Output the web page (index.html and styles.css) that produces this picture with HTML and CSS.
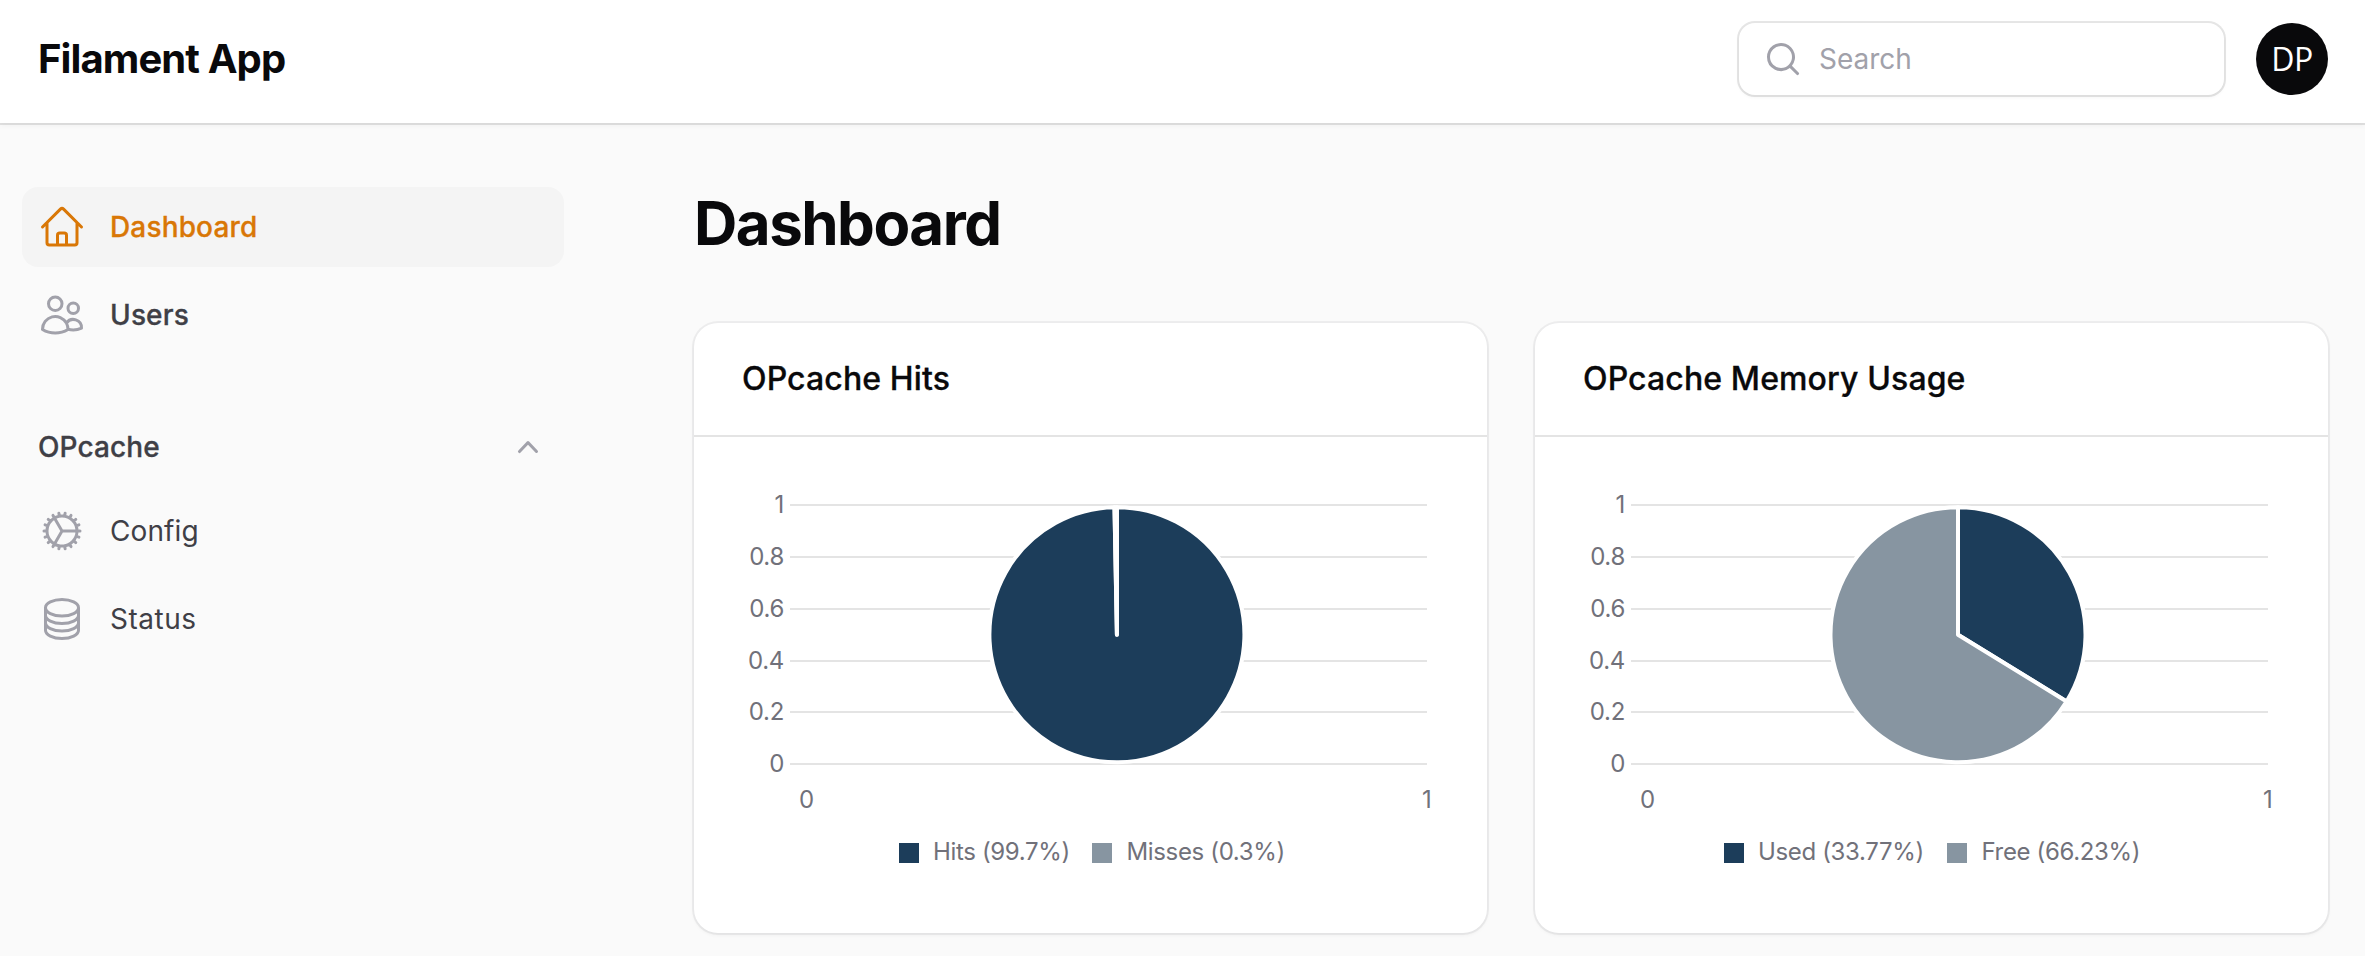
FILE: index.html
```html
<!DOCTYPE html>
<html lang="en">
<head>
<meta charset="utf-8">
<title>Dashboard - Filament App</title>
<link rel="stylesheet" href="styles.css">
</head>
<body>
<header class="topbar">
  <div class="brand">Filament App</div>
  <div class="search">
    <svg class="search-icon" viewBox="0 0 20 20"><path fill-rule="evenodd" d="M9 3.5a5.5 5.5 0 100 11 5.5 5.5 0 000-11zM2 9a7 7 0 1112.452 4.391l3.328 3.329a.75.75 0 11-1.06 1.06l-3.329-3.328A7 7 0 012 9z"/></svg>
    <span>Search</span>
  </div>
  <div class="avatar">DP</div>
</header>
<div class="layout">
  <nav class="sidebar">
    <a class="item item-active">
      <svg class="icon" viewBox="0 0 24 24"><path d="M2.25 12l8.954-8.955c.44-.439 1.152-.439 1.591 0L21.75 12M4.5 9.75v10.125c0 .621.504 1.125 1.125 1.125H9.75v-4.875c0-.621.504-1.125 1.125-1.125h2.25c.621 0 1.125.504 1.125 1.125V21h4.125c.621 0 1.125-.504 1.125-1.125V9.75M8.25 21h8.25"/></svg>
      <span>Dashboard</span>
    </a>
    <a class="item">
      <svg class="icon" viewBox="0 0 24 24"><path d="M15 19.128a9.38 9.38 0 002.625.372 9.337 9.337 0 004.121-.952 4.125 4.125 0 00-7.533-2.493M15 19.128v-.003c0-1.113-.285-2.16-.786-3.07M15 19.128v.106A12.318 12.318 0 018.624 21c-2.331 0-4.512-.645-6.374-1.766l-.001-.109a6.375 6.375 0 0111.964-3.07M12 6.375a3.375 3.375 0 11-6.75 0 3.375 3.375 0 016.75 0zm8.25 2.25a2.625 2.625 0 11-5.25 0 2.625 2.625 0 015.25 0z"/></svg>
      <span>Users</span>
    </a>
    <div class="group">
      <span>OPcache</span>
      <svg class="chevron" viewBox="0 0 20 20"><path d="M14.77 12.79a.75.75 0 01-1.06-.02L10 8.832 6.29 12.77a.75.75 0 11-1.08-1.04l4.25-4.5a.75.75 0 011.08 0l4.25 4.5a.75.75 0 01-.02 1.06z"/></svg>
    </div>
    <a class="item item-sub">
      <svg class="icon" viewBox="0 0 24 24"><path d="M4.5 12a7.5 7.5 0 0015 0m-15 0a7.5 7.5 0 1115 0m-15 0H3m16.5 0H21m-1.5 0H12m-8.457 3.077l1.41-.513m14.095-5.13l1.41-.513M5.106 17.785l1.15-.964m11.49-9.642l1.149-.964M7.501 19.795l.75-1.3m7.5-12.99l.75-1.3m-6.063 16.658l.26-1.477m2.605-14.772l.26-1.477m0 17.726l-.26-1.477M10.698 4.614l-.26-1.477M16.5 19.794l-.75-1.299M7.5 4.205L12 12m6.894 5.785l-1.149-.964M6.256 7.178l-1.15-.964m15.352 8.864l-1.41-.513M4.954 9.435l-1.41-.514M12.002 12l-3.75 6.495"/></svg>
      <span>Config</span>
    </a>
    <a class="item item-sub">
      <svg class="icon" viewBox="0 0 24 24"><path d="M20.25 6.375c0 2.278-3.694 4.125-8.25 4.125S3.75 8.653 3.75 6.375m16.5 0c0-2.278-3.694-4.125-8.25-4.125S3.75 4.097 3.75 6.375m16.5 0v11.25c0 2.278-3.694 4.125-8.25 4.125s-8.25-1.847-8.25-4.125V6.375m16.5 0v3.75m-16.5-3.75v3.75m16.5 0v3.75C20.25 16.153 16.556 18 12 18s-8.25-1.847-8.25-4.125v-3.75m16.5 0c0 2.278-3.694 4.125-8.25 4.125s-8.25-1.847-8.25-4.125"/></svg>
      <span class="status-label">Status</span>
    </a>
  </nav>
  <main class="main">
    <h1 class="title">Dashboard</h1>
    <div class="cards">
      <section class="card">
        <h2 class="card-title">OPcache Hits</h2>
        <svg class="chart" viewBox="0 0 793 496">
          <path class="grid" d="M96 68H733M96 120H733M96 172H733M96 224H733M96 275H733M96 327H733"/>
          <g class="y-ticks">
            <text x="90" y="76">1</text><text x="90" y="128">0.8</text><text x="90" y="180">0.6</text><text x="90" y="232">0.4</text><text x="90" y="283">0.2</text><text x="90" y="335">0</text>
          </g>
          <g class="x-ticks"><text x="112.5" y="371">0</text><text x="733" y="371">1</text></g>
          <path class="slice dark" d="M422.9 197.7V70.2A127.5 127.5 0 1 1 420.497 70.223Z"/>
          <path class="slice gray" d="M422.9 197.7L420.497 70.223A127.5 127.5 0 0 1 422.9 70.2Z"/>
          <rect class="dark" x="205" y="406" width="20" height="20"/>
          <text class="legend" x="239" y="423">Hits (99.7%)</text>
          <rect class="gray" x="398" y="406" width="20" height="20"/>
          <text class="legend" x="432.5" y="423">Misses (0.3%)</text>
        </svg>
      </section>
      <section class="card">
        <h2 class="card-title">OPcache Memory Usage</h2>
        <svg class="chart" viewBox="0 0 793 496">
          <path class="grid" d="M96 68H733M96 120H733M96 172H733M96 224H733M96 275H733M96 327H733"/>
          <g class="y-ticks">
            <text x="90" y="76">1</text><text x="90" y="128">0.8</text><text x="90" y="180">0.6</text><text x="90" y="232">0.4</text><text x="90" y="283">0.2</text><text x="90" y="335">0</text>
          </g>
          <g class="x-ticks"><text x="112.5" y="371">0</text><text x="733" y="371">1</text></g>
          <path class="slice dark" d="M423 197.7V70.2A127.5 127.5 0 0 1 531.6 264.5Z"/>
          <path class="slice gray" d="M423 197.7L531.6 264.5A127.5 127.5 0 1 1 423 70.2Z"/>
          <rect class="dark" x="189" y="406" width="20" height="20"/>
          <text class="legend" x="223" y="423">Used (33.77%)</text>
          <rect class="gray" x="412" y="406" width="20" height="20"/>
          <text class="legend" x="446.5" y="423">Free (66.23%)</text>
        </svg>
      </section>
    </div>
  </main>
</div>
</body>
</html>
```

FILE: styles.css
```css
* { box-sizing: border-box; }
body {
  margin: 0;
  height: 956px;
  overflow: hidden;
  background: #fafafa;
  color: #09090b;
  font-family: Inter, "Liberation Sans", sans-serif;
}
.topbar {
  display: flex;
  align-items: center;
  height: 123px;
  padding: 0 37px 5px 38px;
  background: #fff;
  box-shadow: 0 0 0 2px rgba(9, 9, 11, .1), 0 2px 6px rgba(0, 0, 0, .05);
}
.brand {
  flex: 1;
  font-size: 40px;
  font-weight: 700;
  line-height: 40px;
  letter-spacing: -.9px;
}
.search {
  display: flex;
  align-items: center;
  gap: 16px;
  width: 485px;
  height: 72px;
  margin-right: 32px;
  padding-left: 24px;
  border-radius: 16px;
  background: #fff;
  box-shadow: 0 0 0 2px rgba(9, 9, 11, .1), 0 2px 4px rgba(0, 0, 0, .05);
  color: #a1a1aa;
  font-size: 28px;
}
.search-icon { flex: none; width: 40px; height: 40px; fill: #a1a1aa; }
.icon {
  flex: none;
  width: 48px;
  height: 48px;
  fill: none;
  stroke: #a1a1aa;
  stroke-width: 1.5;
  stroke-linecap: round;
  stroke-linejoin: round;
}
.avatar {
  display: flex;
  align-items: center;
  justify-content: center;
  width: 72px;
  height: 72px;
  border-radius: 50%;
  background: #09090b;
  color: #fff;
  font-family: "Open Sans", "Noto Sans", sans-serif;
  font-size: 32px;
  line-height: 44px;
  letter-spacing: -.5px;
}
.layout { display: flex; }
.sidebar {
  display: flex;
  flex-direction: column;
  gap: 8px;
  width: 564px;
  padding: 64px 0 0 22px;
}
.item {
  display: flex;
  align-items: center;
  gap: 24px;
  height: 80px;
  padding: 0 16px;
  border-radius: 16px;
  color: #3f3f46;
  font-size: 28px;
  font-weight: 500;
  letter-spacing: .15px;
  -webkit-text-stroke: .3px currentColor;
}
.item-active { background: #f4f4f4; color: #d97706; }
.item-active .icon { stroke: #d97706; }
.item-sub {
  font-weight: 400;
  letter-spacing: .1px;
  -webkit-text-stroke: 0;
}
.status-label { letter-spacing: .5px; }
.group {
  display: flex;
  align-items: center;
  justify-content: space-between;
  height: 72px;
  margin-top: 48px;
  padding: 0 16px;
  color: #3f3f46;
  font-size: 28px;
  font-weight: 500;
  letter-spacing: .1px;
  -webkit-text-stroke: .3px currentColor;
}
.chevron { width: 40px; height: 40px; fill: #a1a1aa; }
.main { flex: 1; padding: 64px 37px 0 130px; }
.title {
  margin: 0 0 64px;
  font-size: 60px;
  font-weight: 700;
  line-height: 72px;
  letter-spacing: -1.5px;
}
.cards { display: grid; grid-template-columns: 1fr 1fr; gap: 48px; }
.card {
  height: 610px;
  border-radius: 24px;
  background: #fff;
  box-shadow: 0 0 0 2px rgba(9, 9, 11, .05), 0 2px 4px rgba(0, 0, 0, .05);
}
.card-title {
  height: 114px;
  margin: 0;
  padding: 32px 48px;
  border-bottom: 2px solid #e4e4e4;
  font-size: 32px;
  font-weight: 500;
  line-height: 48px;
  letter-spacing: .12px;
  -webkit-text-stroke: .3px currentColor;
}
.chart { display: block; width: 100%; height: 496px; }
.chart text { fill: #71717a; font-size: 24px; }
.chart .legend { letter-spacing: -.35px; }
.grid { stroke: #e4e4e4; stroke-width: 2; }
.y-ticks { text-anchor: end; letter-spacing: -.3px; }
.x-ticks { text-anchor: middle; }
.slice { stroke: #fff; stroke-width: 4; stroke-linejoin: round; }
.dark { fill: #1c3d5a; }
.gray { fill: #8795a1; }
```
